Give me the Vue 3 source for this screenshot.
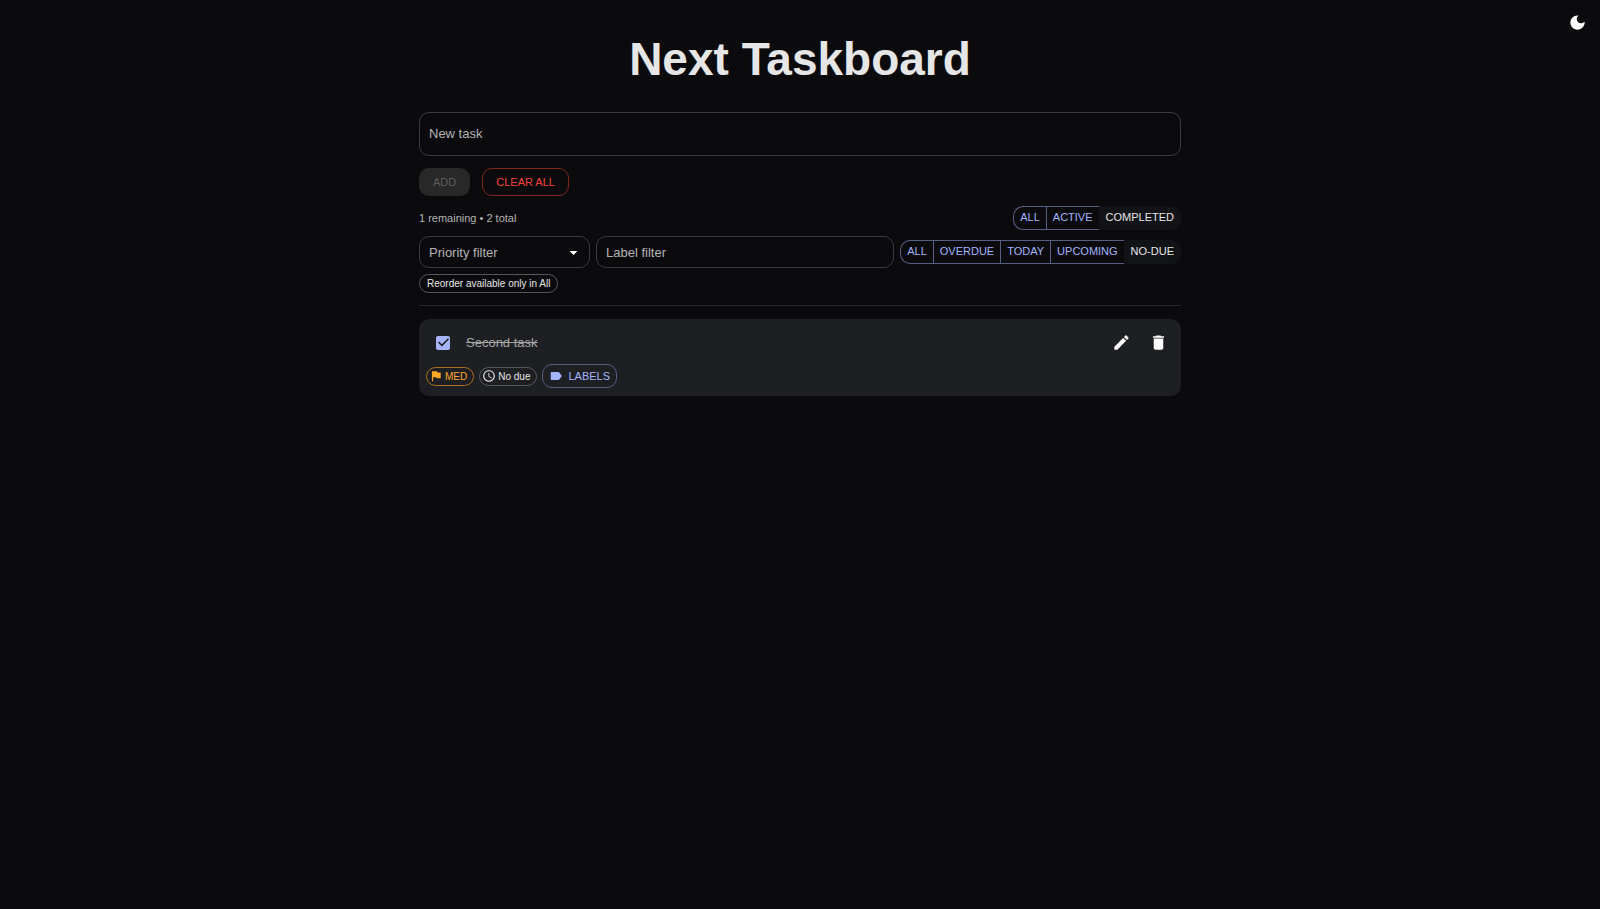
<template>
  <div class="page">
    <header class="topbar">
      <button class="icon-btn" type="button" aria-label="Toggle theme">
        <svg class="icon" viewBox="0 0 24 24">
          <path d="M12 3c-4.97 0-9 4.03-9 9s4.03 9 9 9 9-4.03 9-9c0-.46-.04-.92-.1-1.36-.98 1.37-2.58 2.26-4.4 2.26-2.98 0-5.4-2.42-5.4-5.4 0-1.81.89-3.42 2.26-4.4-.44-.06-.9-.1-1.36-.1z" />
        </svg>
      </button>
    </header>

    <main class="container">
      <h1 class="title">Next Taskboard</h1>

      <form class="new-task" @submit.prevent="addTask">
        <input
          v-model="draft"
          class="field field-large"
          type="text"
          placeholder="New task"
          aria-label="New task"
        />
        <div class="actions">
          <button class="btn btn-add" type="submit" :disabled="!draft.trim()">ADD</button>
          <button class="btn btn-clear" type="button" @click="tasks = []">CLEAR ALL</button>
        </div>
      </form>

      <div class="row stats">
        <span>{{ remaining }} remaining • {{ tasks.length }} total</span>
        <div class="group" role="group" aria-label="Status">
          <button
            v-for="item in statusOptions"
            :key="item"
            type="button"
            :class="{ selected: status === item }"
            @click="status = item"
          >{{ item }}</button>
        </div>
      </div>

      <div class="row filters">
        <div class="select-box">
          <select v-model="priority" class="field" aria-label="Priority filter">
            <option value="">Priority filter</option>
            <option value="LOW">Low</option>
            <option value="MED">Medium</option>
            <option value="HIGH">High</option>
          </select>
          <svg class="icon arrow" viewBox="0 0 24 24"><path d="M7 10l5 5 5-5z" /></svg>
        </div>
        <input
          v-model="label"
          class="field label-filter"
          type="text"
          placeholder="Label filter"
          aria-label="Label filter"
        />
        <div class="group" role="group" aria-label="Due date">
          <button
            v-for="item in dueOptions"
            :key="item"
            type="button"
            :class="{ selected: due === item }"
            @click="due = item"
          >{{ item }}</button>
        </div>
      </div>

      <div class="hint">
        <span v-if="status !== 'ALL'" class="chip">Reorder available only in All</span>
      </div>

      <hr class="divider" />

      <ul class="list">
        <li v-for="task in visibleTasks" :key="task.id" class="card">
          <div class="card-main">
            <span class="check">
              <input :id="'task-' + task.id" v-model="task.done" type="checkbox" />
              <svg v-if="task.done" class="icon tick" viewBox="0 0 24 24">
                <path d="M10 17l-5-5 1.41-1.41L10 14.17l7.59-7.59L19 8z" />
              </svg>
            </span>
            <label :for="'task-' + task.id" class="name" :class="{ done: task.done }">{{ task.title }}</label>
            <button class="icon-btn" type="button" aria-label="Edit task">
              <svg class="icon" viewBox="0 0 24 24">
                <path d="M3 17.25V21h3.75L17.81 9.94l-3.75-3.75L3 17.25zM20.71 7.04c.39-.39.39-1.02 0-1.41l-2.34-2.34a.9959.9959 0 0 0-1.41 0l-1.83 1.83 3.75 3.75 1.83-1.83z" />
              </svg>
            </button>
            <button class="icon-btn" type="button" aria-label="Delete task" @click="removeTask(task.id)">
              <svg class="icon" viewBox="0 0 24 24">
                <path d="M6 19c0 1.1.9 2 2 2h8c1.1 0 2-.9 2-2V7H6v12zM19 4h-3.5l-1-1h-5l-1 1H5v2h14V4z" />
              </svg>
            </button>
          </div>
          <div class="card-meta">
            <button class="chip chip-med" type="button">
              <svg class="chip-icon" viewBox="0 0 24 24">
                <path d="M14.4 6L14 4H5v17h2v-7h5.6l.4 2h7V6z" />
              </svg>
              <span>{{ task.priority }}</span>
            </button>
            <button class="chip" type="button">
              <svg class="chip-icon" viewBox="0 0 24 24">
                <path d="M11.99 2C6.47 2 2 6.48 2 12s4.47 10 9.99 10C17.52 22 22 17.52 22 12S17.52 2 11.99 2zM12 20c-4.42 0-8-3.58-8-8s3.58-8 8-8 8 3.58 8 8-3.58 8-8 8z" />
                <path d="M12.5 7H11v6l5.25 3.15.75-1.23-4.5-2.67z" />
              </svg>
              <span>No due</span>
            </button>
            <button class="btn-labels" type="button">
              <svg class="chip-icon" viewBox="0 0 24 24">
                <path d="M17.63 5.84C17.27 5.33 16.67 5 16 5L5 5.01C3.9 5.01 3 5.9 3 7v10c0 1.1.9 1.99 2 1.99L16 19c.67 0 1.27-.33 1.63-.84L22 12l-4.37-6.16z" />
              </svg>
              <span>LABELS</span>
            </button>
          </div>
        </li>
      </ul>
    </main>
  </div>
</template>

<script setup>
import { ref, computed } from "vue";

const statusOptions = ["ALL", "ACTIVE", "COMPLETED"];
const dueOptions = ["ALL", "OVERDUE", "TODAY", "UPCOMING", "NO-DUE"];

const draft = ref("");
const status = ref("COMPLETED");
const due = ref("NO-DUE");
const priority = ref("");
const label = ref("");

const tasks = ref([
  { id: 1, title: "First task", done: false, priority: "MED", labels: [] },
  { id: 2, title: "Second task", done: true, priority: "MED", labels: [] },
]);

const remaining = computed(() => tasks.value.filter((t) => !t.done).length);

// tasks have no due date yet, so only ALL and NO-DUE can match
const visibleTasks = computed(() =>
  tasks.value.filter((t) => {
    if (status.value === "ACTIVE" && t.done) return false;
    if (status.value === "COMPLETED" && !t.done) return false;
    if (due.value !== "ALL" && due.value !== "NO-DUE") return false;
    if (priority.value && t.priority !== priority.value) return false;
    return !label.value || t.labels.some((l) => l.includes(label.value));
  })
);

const addTask = () => {
  tasks.value.push({
    id: Date.now(),
    title: draft.value.trim(),
    done: false,
    priority: "MED",
    labels: [],
  });
  draft.value = "";
};

const removeTask = (id) => {
  tasks.value = tasks.value.filter((t) => t.id !== id);
};
</script>

<style>
body {
  margin: 0;
  background: #0b0b0d;
}
</style>

<style scoped>
.page {
  min-height: 100vh;
  color: #e6e6e6;
  font-family: "Liberation Sans", Arial, sans-serif;
  font-size: 13px;
  line-height: 20px;
}
.page * {
  box-sizing: border-box;
}
button,
input,
select {
  margin: 0;
  font-family: inherit;
}
button {
  cursor: pointer;
}
.topbar {
  display: flex;
  justify-content: flex-end;
  padding: 7px 7px 0;
}
.icon-btn {
  display: flex;
  padding: 6px;
  border: 0;
  border-radius: 50%;
  background: none;
  color: #fff;
}
.icon {
  width: 19px;
  height: 19px;
  fill: currentColor;
}
.container {
  max-width: 762px;
  margin: 0 auto;
}
.title {
  margin: -7px 0 25px;
  font-size: 46px;
  font-weight: 700;
  line-height: 56px;
  text-align: center;
}
.field {
  width: 100%;
  height: 32px;
  padding: 0 9px;
  border: 1px solid #3b3b3d;
  border-radius: 10px;
  outline: none;
  background: transparent;
  color: #e6e6e6;
  font-size: 13px;
}
.field::placeholder {
  color: #b4b4b5;
  opacity: 1;
}
.field-large {
  display: block;
  height: 44px;
  padding-bottom: 2px;
}
.actions {
  display: flex;
  gap: 12px;
  margin-top: 12px;
}
.btn {
  height: 28px;
  padding: 0 13px;
  border: 1px solid transparent;
  border-radius: 10px;
  background: none;
  font-size: 11px;
}
.btn-add {
  background: #a5b4fc;
  color: #0b0b0d;
}
.btn-add:disabled {
  background: #282829;
  color: #5c5c5d;
  cursor: default;
}
.btn-clear {
  border-color: #802722;
  color: #f44336;
}
.row {
  display: flex;
  align-items: center;
}
.stats {
  justify-content: space-between;
  margin-top: 10px;
  color: #b4b4b5;
  font-size: 11px;
}
.filters {
  gap: 6px;
  margin-top: 6px;
}
.select-box {
  display: grid;
  flex: 0 0 171px;
  align-items: center;
}
.select-box > * {
  grid-area: 1 / 1;
}
.select-box .field {
  appearance: none;
  color: #b4b4b5;
}
.select-box option {
  background: #1e1f22;
}
.arrow {
  justify-self: end;
  margin-right: 7px;
  color: #fff;
  pointer-events: none;
}
.label-filter {
  flex: 1;
  min-width: 0;
}
.group {
  display: flex;
}
.group button {
  height: 24px;
  padding: 0 6px 2px;
  border: 1px solid #585f85;
  border-right-width: 0;
  background: none;
  color: #a5b4fc;
  font-size: 11px;
}
.group button:first-child {
  border-radius: 10px 0 0 10px;
}
.group button:last-child {
  border-right-width: 1px;
  border-radius: 0 10px 10px 0;
}
.group .selected {
  border-color: #121316;
  background: #121316;
  color: #e6e6e6;
}
.hint {
  display: flex;
  margin-top: 6px;
}
.chip {
  display: flex;
  align-items: center;
  height: 19px;
  padding: 0 7px;
  border: 1px solid #56575a;
  border-radius: 10px;
  background: none;
  color: #e6e6e6;
  font-size: 10px;
}
.divider {
  height: 1px;
  margin: 12px 0 13px;
  border: 0;
  background: #29292b;
}
.list {
  margin: 0;
  padding: 0;
  list-style: none;
}
.card {
  padding: 8px 7px;
  border-radius: 10px;
  background: #1e1f22;
}
.card-main {
  display: flex;
  align-items: center;
  gap: 6px;
  height: 31px;
}
.check {
  display: grid;
  place-items: center;
  width: 34px;
  height: 31px;
}
.check > * {
  grid-area: 1 / 1;
}
.check input {
  width: 14px;
  height: 14px;
  border: 2px solid #b4b4b5;
  border-radius: 2px;
  appearance: none;
}
.check input:checked {
  border-color: #a5b4fc;
  background: #a5b4fc;
}
.tick {
  color: #1e1f22;
  pointer-events: none;
}
.name {
  flex: 1;
}
.name.done {
  color: #a3a4a5;
  text-decoration: line-through;
}
.card-meta {
  display: flex;
  align-items: center;
  gap: 5px;
  margin-top: 6px;
}
.card-meta .chip {
  gap: 2px;
  padding: 0 6px 0 2px;
}
.card-meta .chip-med {
  border-color: #a8701f;
  color: #ffa726;
}
.chip-icon {
  width: 14px;
  height: 14px;
  fill: currentColor;
}
.btn-labels {
  display: flex;
  align-items: center;
  gap: 5px;
  height: 24px;
  padding: 0 6px;
  border: 1px solid #565e85;
  border-radius: 10px;
  background: none;
  color: #a5b4fc;
  font-size: 11px;
}
</style>
